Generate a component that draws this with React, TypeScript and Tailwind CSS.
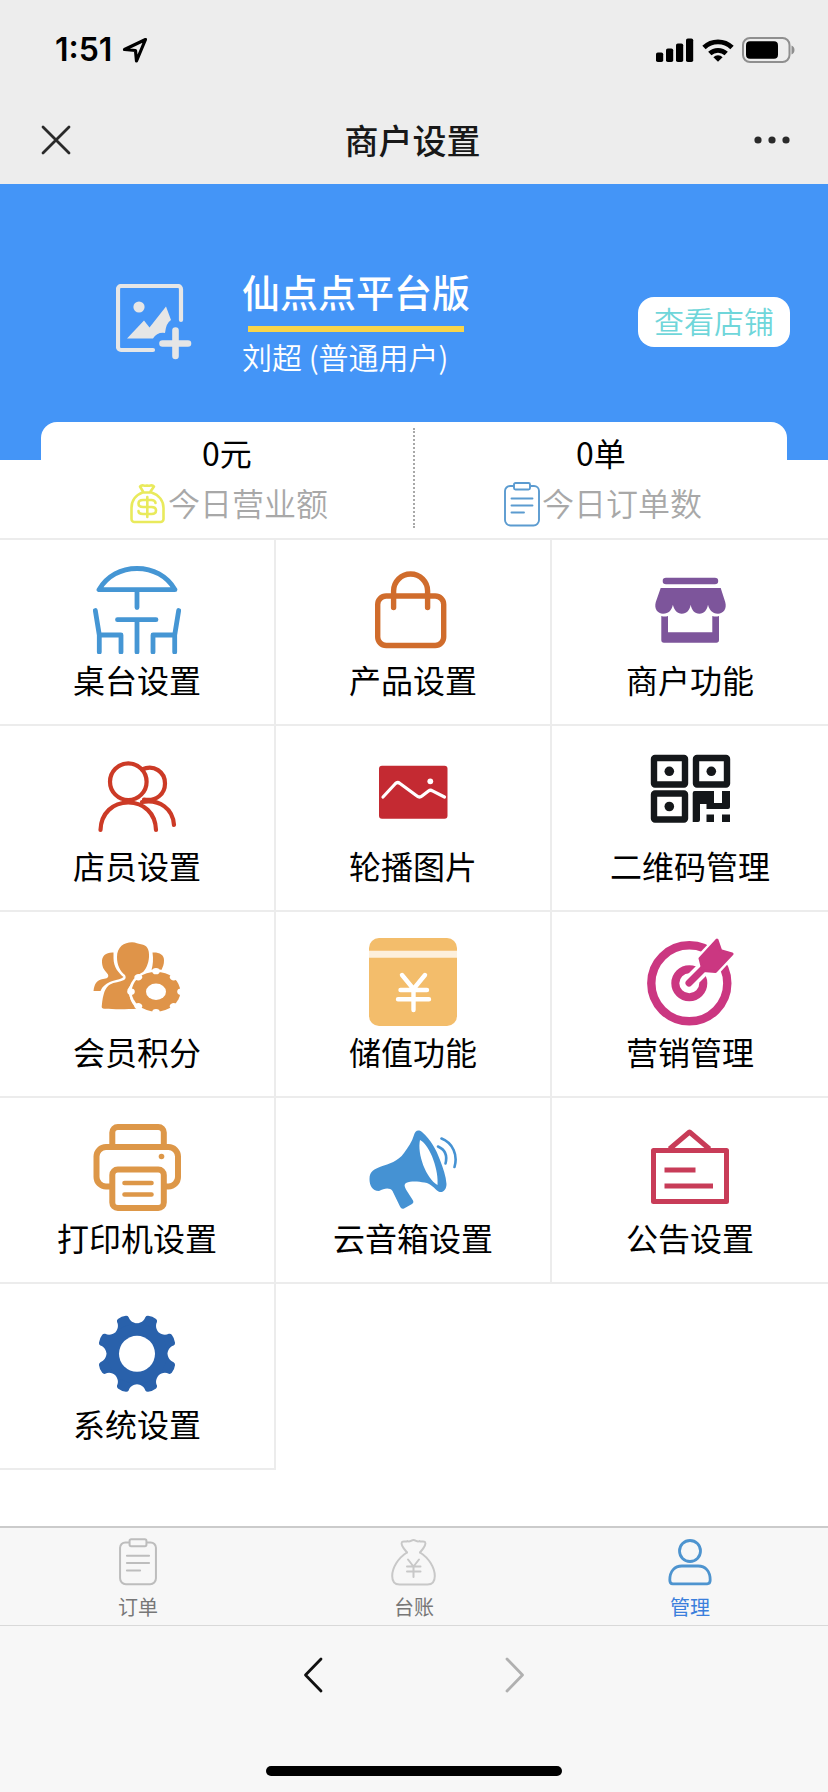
import type { ReactNode } from "react";

interface MenuItem {
  label: string;
  icon: ReactNode;
}

interface StatProps {
  value: string;
  label: string;
  icon: ReactNode;
}

function ClipboardIcon({ className }: { className: string }) {
  return (
    <svg viewBox="0 0 36 45" fill="none" stroke="currentColor" strokeWidth="1.900" strokeLinecap="round" className={className}>
      <path d="M9 4H6a5 5 0 0 0-5 5v29a5.500 5.500 0 0 0 5.500 5.500h23A5.500 5.500 0 0 0 35 38V9a5 5 0 0 0-5-5h-3" />
      <rect x="10" y="1" width="16" height="6.500" rx="1.500" />
      <path d="M7.500 16.500h21M7.500 23.500h21M7.500 30.500h12.500" />
    </svg>
  );
}

function CashBagIcon() {
  return (
    <svg viewBox="0 0 36 42" fill="none" stroke="currentColor" strokeWidth="2.600" strokeLinejoin="round" strokeLinecap="round" className="h-[42px] w-9 text-[#e9ea5c]">
      <path d="M13 8.500 10 3.500c2-2.500 4 0 7-1 3 1 5-1.500 7 1l-3.500 5" />
      <path d="M12.500 9.500h9C29 12 33.500 18 33.500 25v11a3 3 0 0 1-3 3H4.500a3 3 0 0 1-3-3V25c0-7 4-13 11-15.500z" />
      <path d="M25.500 20c0-2-2-3-4-3h-8.500c-3 0-4.500 1.500-4.500 3.500s1.500 3.500 4.500 3.500h8.500c3 0 4.500 1.500 4.500 3.500s-1.500 3.500-4.500 3.500H13c-2.500 0-4.500-1-4.500-3M17.300 14v20" />
    </svg>
  );
}

function LedgerIcon() {
  return (
    <svg viewBox="0 0 46 48" fill="none" stroke="currentColor" strokeWidth="2" strokeLinejoin="round" strokeLinecap="round" className="h-12 w-[46px] text-[#c8c8c8]">
      <path d="M16 14.500C12 10 9.500 6 11 4c2-1.500 4 .5 5.500-1C19 4.500 20 2 22.500 2s3.500 2.500 6 1c1.500 1.500 3.500-.5 5.500 1 1.500 2-1 6-5 10.500" />
      <path d="M16 14.500C7 20 1.200 30 1.200 38c0 6 2.500 8.500 7.300 8.500h28c4.800 0 7.300-2.500 7.300-8.500C43.800 30 38 20 29 14.500" />
      <path d="m17 21.500 5.500 7 5.500-7M16 28.500h13.500M16 33.500h13.500M22.500 28.500V39" />
    </svg>
  );
}

function UserIcon() {
  return (
    <svg viewBox="0 0 44 48" fill="none" stroke="currentColor" strokeWidth="2.800" strokeLinejoin="round" className="h-12 w-11 text-[#4e94cf]">
      <circle cx="22" cy="13" r="10.500" />
      <path d="M1.800 42c0-9 5-14 12-14h16.400c7 0 12 5 12 14 0 2.500-.8 3.800-3 3.800H4.800c-2.200 0-3-1.300-3-3.800z" />
    </svg>
  );
}

const TURNS = [0, 45, 90, 135, 180, 225, 270, 315];

const iconClass = "size-[88px]";

const MENU: MenuItem[] = [
  {
    label: "桌台设置",
    icon: (
      <svg viewBox="0 0 88 88" fill="none" stroke="#4596d4" strokeWidth="4.800" strokeLinecap="round" strokeLinejoin="round" className={iconClass}>
        <path d="M6 23.700h76C74 10 60 2.500 44 2.500S14 10 6 23.700zM44 24v17.500M24.500 53.700H63M44 54v32" />
        <path d="M2.300 44.500 6.300 69H28v17M6.300 69v17M85.700 44.500 81.700 69H60v17M81.700 69v17" />
      </svg>
    ),
  },
  {
    label: "产品设置",
    icon: (
      <svg viewBox="0 0 88 88" fill="none" stroke="#d06c2c" strokeWidth="5.400" strokeLinecap="round" className={iconClass}>
        <rect x="8.700" y="30" width="66" height="49.500" rx="8.500" />
        <path d="M24.600 41.500V25a17 17 0 0 1 34 0v16.500" />
      </svg>
    ),
  },
  {
    label: "商户功能",
    icon: (
      <svg viewBox="0 0 88 88" fill="#7d559b" className={iconClass}>
        <rect x="16.700" y="11.700" width="55.500" height="6.600" rx="3.300" />
        <path d="M14.700 22h60l4.500 14c2 7-2 11.700-7.200 11.700-6 0-9-4.500-10-9-.8 5-4 9-8.500 9-5 0-8-4-8.800-9-.8 5-3.900 9-8.900 9-4.500 0-7.900-4-8.900-9-1 5-4 9-9.900 9-5.200 0-9.200-4.700-7.200-11.700z" />
        <path d="M15.300 50q3.500 1 6.700 0v16.300h44.300V50q3.500 1 6.700 0v24a2.700 2.700 0 0 1-2.700 2.700H18a2.700 2.700 0 0 1-2.700-2.700z" />
      </svg>
    ),
  },
  {
    label: "店员设置",
    icon: (
      <svg viewBox="0 0 88 88" fill="none" stroke="#cc3a26" strokeWidth="4.200" strokeLinecap="round" className={iconClass}>
        <circle cx="35.300" cy="29.700" r="18.300" />
        <path d="M7.500 78C8 61 20 50.500 35.300 50.500S62.500 61 63 78" />
        <path d="M49 17.500C61 12 72 20 72 31.500c0 10-8 18-21 16M49 50c18-3 31 7 32 23" />
      </svg>
    ),
  },
  {
    label: "轮播图片",
    icon: (
      <svg viewBox="0 0 88 88" className={iconClass}>
        <rect x="10" y="13.700" width="68.500" height="53" rx="3" fill="#c42a32" />
        <path d="M14 45 26.500 31.500q2-2 4.500 0l17 12.500q2.500 2 5 0l6.500-5q2-1.500 4 0L75.500 45" fill="none" stroke="#fff" strokeWidth="3.200" strokeLinecap="round" />
        <circle cx="61.300" cy="29.300" r="2.900" fill="#fff" />
      </svg>
    ),
  },
  {
    label: "二维码管理",
    icon: (
      <svg viewBox="0 0 88 88" fill="#14171a" className={iconClass}>
        <g fill="none" stroke="#14171a" strokeWidth="6.400">
          <rect x="8" y="6" width="31" height="26.500" rx="1" />
          <rect x="50" y="6" width="31" height="26.500" rx="1" />
          <rect x="8" y="41.500" width="31" height="26" rx="1" />
        </g>
        <circle cx="23.300" cy="19.300" r="4.800" />
        <circle cx="65.300" cy="19.300" r="4.800" />
        <circle cx="23.300" cy="54.500" r="4.800" />
        <path d="M48.700 39H68v12h8V39h8v16a2 2 0 0 1-2 2H60.500v-5H54v16a2 2 0 0 1-2 2h-5.300V41a2 2 0 0 1 2-2zM60.500 62.500H68V70h-7.500zM76 62.500h8V70h-8z" />
      </svg>
    ),
  },
  {
    label: "会员积分",
    icon: (
      <svg viewBox="0 0 88 88" fill="#df9449" className={iconClass}>
        <path d="M20.500 14.500c-7-.5-12 3-11.500 10 .3 6 3 8 6 12 1 3-1 4-5 4.500C4 42 1.500 45 .5 53h7c2-5 6-8 12-10 5-1.500 9-2 11-4-5-4-10-10-10-19z" />
        <path d="M24 19C24 9 31 4.300 39 4.300c4 0 6 1.700 9 1.900 6 .8 8.500 5 8 12.800-.5 7-3 12-7 16.500-6 4-10.500 9.500-14.500 16 3 5 1 12 9.500 19.200-10 .6-24 .6-32 0-3-.2-3.500-1-3.200-3C10 56 12 49.500 17 46.500c4-2.300 10-2.500 14-4.500 2-1.200 2-3 1-5-5-4-8-10-8-18z" />
        <path d="M59.500 14.500c6-.5 12 2 11.500 8 0 4-1 6-2.500 9.500H58.500c1.500-5 2-11 1-17.500z" />
        <ellipse cx="63" cy="53.700" rx="27" ry="22.500" fill="#fff" />
        <g transform="translate(63 53.700) scale(1 .82)">
          <circle r="24.300" />
          {TURNS.map((deg) => (
            <circle key={deg} cy="-25" r="3.800" fill="#fff" transform={`rotate(${deg})`} />
          ))}
          <circle r="10" fill="#fff" />
        </g>
      </svg>
    ),
  },
  {
    label: "储值功能",
    icon: (
      <svg viewBox="0 0 88 88" className={iconClass}>
        <rect width="88" height="88" rx="10" fill="#f3bd6b" />
        <path d="M0 12.700h88v7H0z" fill="#fdf0dd" />
        <path d="m33 37 11.500 14L56 37M31.500 52H58M29 61.300h31M44.500 52v20" fill="none" stroke="#fff" strokeWidth="4.400" strokeLinecap="round" />
      </svg>
    ),
  },
  {
    label: "营销管理",
    icon: (
      <svg viewBox="0 0 88 88" fill="none" className={iconClass}>
        <circle cx="43.300" cy="45.300" r="38" stroke="#cb3781" strokeWidth="8.400" />
        <circle cx="43.300" cy="45.300" r="14" stroke="#cb3781" strokeWidth="8" />
        <g stroke="#fff" strokeWidth="14" strokeLinecap="round">
          <path d="m43 45 16-16" />
          <path d="M53 20 71 1l3.700 11.700L87 16 70 34.500 57.500 33z" fill="#fff" strokeWidth="6" strokeLinejoin="round" />
        </g>
        <path d="m43 45 18-18" stroke="#cb3781" strokeWidth="7" strokeLinecap="round" />
        <path d="M54 20.500 71 2l3.700 10.700L86 16 69.500 33.500 57 32.500z" fill="#cb3781" stroke="#cb3781" strokeWidth="3" strokeLinejoin="round" />
      </svg>
    ),
  },
  {
    label: "打印机设置",
    icon: (
      <svg viewBox="0 0 88 88" fill="none" stroke="#dd9748" strokeWidth="6" strokeLinecap="round" className={iconClass}>
        <path d="M19.300 22V8.500a5.500 5.500 0 0 1 5.500-5.500h40.500a5.500 5.500 0 0 1 5.500 5.500V22" />
        <path d="M17 62.500h-4A9.500 9.500 0 0 1 3.500 53V32.500a9.500 9.500 0 0 1 9.500-9.500h62.500a9.500 9.500 0 0 1 9.500 9.500V53a9.500 9.500 0 0 1-9.500 9.500H73" />
        <rect x="19.300" y="45.500" width="51.500" height="38.500" rx="5.500" />
        <path d="M31.500 59h27M31.500 70.500h27" strokeWidth="4.600" />
        <circle cx="68.500" cy="32.500" r="2.800" fill="#dd9748" stroke="none" />
      </svg>
    ),
  },
  {
    label: "云音箱设置",
    icon: (
      <svg viewBox="0 0 88 88" fill="#4592d3" className={iconClass}>
        <path
          fillRule="evenodd"
          d="M45 11c1-4 4-6 8-3 9 8 14 17 18 28 3 8 6 16 6.500 24 0 6-4 9.500-8 7.500-4-2.500-7-8-14-9-6-1-13-2-18.500.5-2.500 2-1 4 0 6.500l7 11c.8 1.800.3 2.500-1 3.500l-8 4.500c-2 .5-2.800 0-4-2l-7.500-15.500c-2.500-3.500-8-3-13.500 0C3 67 .5 61 .5 55c0-8 5-10 11.500-12.500 8-2.500 17-5 23-13.500 4-6 8-11 10-18zM51 16c-3 14 6 38 17.500 45C70 48 62 22 51 16z"
        />
        <g fill="none" stroke="#4592d3" strokeWidth="2.600" strokeLinecap="round">
          <path d="M69 22.500c7 3 9.500 9 7.500 17" />
          <path d="M72.500 14.500C84 19 89 31 85.500 43" />
        </g>
      </svg>
    ),
  },
  {
    label: "公告设置",
    icon: (
      <svg viewBox="0 0 88 88" fill="none" stroke="#c83c58" strokeWidth="5" strokeLinejoin="round" className={iconClass}>
        <rect x="7.500" y="26.500" width="73" height="51" />
        <path d="m23.500 25 20-17 20 17M18.500 46h31M18.500 62H67" />
      </svg>
    ),
  },
  {
    label: "系统设置",
    icon: (
      <svg viewBox="0 0 88 88" fill="#2961ab" className={iconClass}>
        <g transform="translate(44 43.800)">
          {TURNS.map((deg) => (
            <path
              key={deg}
              d="M0 0-11.700-28.200C-8.500-29.700-6-33-6.300-37q.2-1.800 2-2.400 4.300-1.200 8.600 0 1.800.6 2 2.400C6-33 8.500-29.700 11.700-28.200z"
              transform={`rotate(${deg + 22.5})`}
            />
          ))}
          <circle r="30" />
          <circle r="18" fill="#fff" />
        </g>
      </svg>
    ),
  },
];

function StatusBar() {
  return (
    <div className="flex h-[98px] items-center justify-between pt-0.5 pr-8 pl-[55px]">
      <div className="flex items-center gap-2.5">
        <span className="font-['Inter',sans-serif] text-[32px] leading-10 font-semibold text-black">1:51</span>
        <svg viewBox="0 0 26 26" fill="none" stroke="#000" strokeWidth="3.200" strokeLinejoin="round" className="size-[26px]">
          <path d="M23.500 2.500 2.500 12.500l11 1 1 10.500z" />
        </svg>
      </div>
      <div className="flex items-center gap-2">
        <svg viewBox="0 0 38 24" className="h-6 w-[38px]">
          <rect x="0" y="14.500" width="7.200" height="9.500" rx="1.800" />
          <rect x="10" y="10.500" width="7.200" height="13.500" rx="1.800" />
          <rect x="20" y="5.500" width="7.200" height="18.500" rx="1.800" />
          <rect x="30" y="0.500" width="7.200" height="23.500" rx="1.800" />
        </svg>
        <svg viewBox="0 0 32 24" fill="none" stroke="#000" strokeWidth="4.800" className="h-6 w-8">
          <path d="M2 9.500a20 20 0 0 1 28 0M7.800 15.600a12 12 0 0 1 16.400 0" />
          <path d="m16 23.800-4.600-4.600a6.500 6.500 0 0 1 9.200 0z" fill="#000" stroke="none" />
        </svg>
        <svg viewBox="0 0 54 26" className="h-[26px] w-[54px]">
          <rect x="1" y="1" width="46.500" height="24" rx="7" fill="none" stroke="#8f8f8f" strokeWidth="2" />
          <rect x="4" y="4.200" width="32" height="17.600" rx="4" />
          <path d="M49.500 8.500c4 1.500 4 7.500 0 9z" fill="#8f8f8f" />
        </svg>
      </div>
    </div>
  );
}

function TitleBar() {
  return (
    <div className="flex h-[86px] items-center justify-between pr-[38px] pb-0.5 pl-[41px]">
      <button aria-label="关闭">
        <svg viewBox="0 0 30 30" stroke="#2a2a2a" strokeWidth="2.800" strokeLinecap="round" className="size-[30px]">
          <path d="m2 2 26 26M28 2 2 28" />
        </svg>
      </button>
      <h1 className="text-[34px] leading-[48px] font-medium text-[#181818]">商户设置</h1>
      <button aria-label="更多">
        <svg viewBox="0 0 36 30" fill="#2a2a2a" className="h-[30px] w-9">
          <circle cx="4" cy="15" r="3.600" />
          <circle cx="18" cy="15" r="3.600" />
          <circle cx="32" cy="15" r="3.600" />
        </svg>
      </button>
    </div>
  );
}

function ShopBanner() {
  return (
    <section className="flex items-center bg-[#4495f7] py-[78px] pr-[38px] pl-[116px] text-white">
      <svg viewBox="0 0 76 76" className="size-[76px]">
        <path d="M65 36V5a3 3 0 0 0-3-3H5a3 3 0 0 0-3 3v58a3 3 0 0 0 3 3h32" fill="none" stroke="#e6e6e6" strokeWidth="4.200" strokeLinecap="round" />
        <circle cx="23" cy="23" r="5.600" fill="#e6e6e6" />
        <path d="m11 54.500 17-18 5.500 7L50 22.500 55 36q-5 3-6 13-8-1-12 5.500z" fill="#e6e6e6" />
        <path d="M59.500 46.500v25.500M46.500 59.500H72" stroke="#e6e6e6" strokeWidth="6.600" strokeLinecap="round" />
      </svg>
      <div className="ml-[50px] pt-1.5">
        <h2 className="text-[38px] leading-[46px] font-medium">仙点点平台版</h2>
        <div className="mx-1.5 mt-3 h-1.5 bg-[#f8d54a]" />
        <p className="pb-0.5 text-[30px] leading-[48px] font-[350]">刘超 (普通用户)</p>
      </div>
      <a href="#shop" className="ml-auto rounded-2xl bg-white px-4 pb-1 text-[30px] leading-[46px] font-[350] text-[#6fd6da]">
        查看店铺
      </a>
    </section>
  );
}

function Stat({ value, label, icon }: StatProps) {
  return (
    <div className="flex-1 text-center text-[32px]">
      <p className="pb-1 leading-[48px] text-black">{value}</p>
      <div className="flex h-12 items-center justify-center gap-0.5 pl-1">
        {icon}
        <span className="pb-1 leading-[44px] font-[350] text-[#a8a8a8]">{label}</span>
      </div>
    </div>
  );
}

export default function App() {
  return (
    <div className="flex min-h-screen flex-col bg-white font-['Noto_Sans_CJK_SC',sans-serif]">
      <header className="bg-[#ededed]">
        <StatusBar />
        <TitleBar />
      </header>

      <main className="flex-1">
        <ShopBanner />
        <section className="relative mx-[41px] -mt-[38px] flex rounded-t-2xl bg-white pt-1.5 pb-2.5">
          <Stat value="0元" label="今日营业额" icon={<CashBagIcon />} />
          <div className="border-l-2 border-dotted border-[#a8a8a8]" />
          <Stat value="0单" label="今日订单数" icon={<ClipboardIcon className="h-[45px] w-9 text-[#5b9bd0]" />} />
        </section>

        <nav className="grid grid-cols-3 border-t-2 border-[#ececec]">
          {MENU.map((item) => (
            <a
              key={item.label}
              href="#menu"
              className="flex flex-col items-center border-r-2 border-b-2 border-[#ececec] pt-[26px] pb-5 nth-[3n]:border-r-0"
            >
              {item.icon}
              <span className="text-[32px] leading-[50px] text-black">{item.label}</span>
            </a>
          ))}
        </nav>
      </main>

      <footer className="bg-[#f7f7f7]">
        <nav className="grid grid-cols-3 border-t-2 border-b border-t-[#cbcbcb] border-b-[#d9d9d9] pt-2.5 pb-[5px] text-[20px] leading-[26px] text-[#777]">
          <a href="#orders" className="flex flex-col items-center gap-2">
            <ClipboardIcon className="h-12 w-[38px] text-[#bdbdbd]" />
            订单
          </a>
          <a href="#ledger" className="flex flex-col items-center gap-2">
            <LedgerIcon />
            台账
          </a>
          <a href="#manage" className="flex flex-col items-center gap-2 text-[#3b7fdc]">
            <UserIcon />
            管理
          </a>
        </nav>
        <div className="flex h-[98px] items-center justify-center gap-[182px]">
          <button aria-label="后退">
            <svg viewBox="0 0 20 36" fill="none" stroke="#111" strokeWidth="2.800" strokeLinecap="round" strokeLinejoin="round" className="h-9 w-5">
              <path d="M18 2 2.500 18 18 34" />
            </svg>
          </button>
          <button aria-label="前进">
            <svg viewBox="0 0 20 36" fill="none" stroke="#b0b0b0" strokeWidth="2.800" strokeLinecap="round" strokeLinejoin="round" className="h-9 w-5">
              <path d="m2 2 15.500 16L2 34" />
            </svg>
          </button>
        </div>
        <div className="flex justify-center pt-[42px] pb-4">
          <div className="h-2.5 w-[296px] rounded-full bg-black" />
        </div>
      </footer>
    </div>
  );
}
